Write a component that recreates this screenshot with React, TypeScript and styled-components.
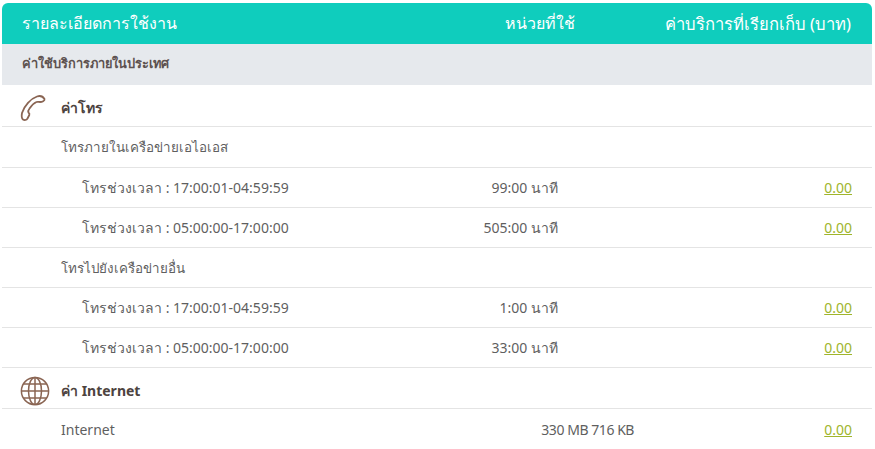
import React from 'react';
import styled, { createGlobalStyle } from 'styled-components';

const GlobalStyle = createGlobalStyle`
  html, body {
    margin: 0;
    padding: 0;
    background: #fff;
    overflow: hidden;
  }
  body {
    font-family: "Noto Sans", "DejaVu Sans", sans-serif;
  }
`;

const Page = styled.div`
  width: 875px;
  height: 449px;
  padding: 3px 3px 0 2px;
  box-sizing: border-box;
  overflow: hidden;
`;

const Card = styled.div`
  background: #fff;
`;

const Columns = styled.div`
  display: grid;
  grid-template-columns: 1fr 200px 218px;
  align-items: center;
`;

const Header = styled(Columns)`
  height: 41px;
  padding: 0 21px 0 20px;
  background: #0fcdbd;
  border-radius: 6px 6px 0 0;
  color: #fff;
  font-size: 16px;
`;

const HeadCell = styled.div<{ $right?: boolean; $pad?: number; $size?: number }>`
  text-align: ${p => (p.$right ? 'right' : 'left')};
  padding-right: ${p => p.$pad ?? 0}px;
  font-size: ${p => p.$size ?? 16}px;
  white-space: nowrap;
`;

const Section = styled.div`
  height: 41px;
  display: flex;
  align-items: center;
  padding: 0 0 2px 20px;
  box-sizing: border-box;
  background: #e6e9ed;
  color: #5d5250;
  font-size: 12.8px;
  font-weight: 700;
`;

const Group = styled.div<{ $tall?: boolean }>`
  height: ${p => (p.$tall ? 42 : 41)}px;
  box-sizing: border-box;
  display: flex;
  align-items: center;
  padding: 5px 0 0 18px;
  border-bottom: 1px solid #e4e4e4;
  color: #4d4340;
  font-size: 14px;
  font-weight: 700;
`;

const GroupIcon = styled.svg`
  width: 30px;
  height: 30px;
  margin-right: 11px;
  flex: none;
  fill: none;
  stroke: #8a6553;
`;

const Row = styled(Columns)<{ $indent?: number; $tall?: boolean }>`
  height: ${p => (p.$tall ? 41 : 40)}px;
  box-sizing: border-box;
  padding: 0 20px 0 ${p => p.$indent ?? 59}px;
  border-bottom: 1px solid #e4e4e4;
  color: #5f5f5f;
  font-size: 14px;
`;

const LastRow = styled(Row)`
  height: 42px;
`;

const Label = styled.div`
  white-space: nowrap;
`;

const SubLabel = styled(Label)`
  padding-top: 1px;
  font-size: 13.4px;
`;

const Usage = styled.div<{ $pad?: number }>`
  text-align: right;
  white-space: nowrap;
  padding-right: ${p => p.$pad ?? 76}px;
`;

const DataUsage = styled(Usage)`
  letter-spacing: -0.45px;
`;

const Cost = styled.a`
  justify-self: end;
  color: #a0b52c;
  text-decoration: underline;
`;

const PhoneIcon = () => (
  <GroupIcon viewBox="0 0 30 30" strokeWidth="1.8" strokeLinejoin="round">
    <path d="M24.500 6C23 3.500 20 2.500 17 3.500 11 5.500 4 13 2 20c-.6 3-.2 5.500 1 6.500 1.500 1 3.500.5 4.500-1L9.300 22c.5-1 0-1.700-.8-2.500-.5-1-.2-2.500 1-4C11.500 12.500 14 10 16.500 9c1.500-.5 2.500 0 3.500 0 2 0 5-1 4.500-3z" />
  </GroupIcon>
);

const GlobeIcon = () => (
  <GroupIcon viewBox="0 0 30 30" strokeWidth="1.5">
    <circle cx="15" cy="15" r="13.600" />
    <ellipse cx="15" cy="15" rx="6.500" ry="13.600" />
    <path d="M15 1.400v27.200M1.400 15h27.200M3.500 8h23M3.500 22h23" />
  </GroupIcon>
);

const callRows = (rows: [string, string][]) =>
  rows.map(([time, usage]) => (
    <Row key={time + usage} $indent={80}>
      <Label>โทรช่วงเวลา : {time}</Label>
      <Usage>{usage}</Usage>
      <Cost>0.00</Cost>
    </Row>
  ));

const App: React.FC = () => {
  return (
    <Page>
      <GlobalStyle />
      <Card>
        <Header>
          <HeadCell>รายละเอียดการใช้งาน</HeadCell>
          <HeadCell $right $pad={58}>หน่วยที่ใช้</HeadCell>
          <HeadCell $right $size={16.6}>ค่าบริการที่เรียกเก็บ (บาท)</HeadCell>
        </Header>
        <Section>ค่าใช้บริการภายในประเทศ</Section>
        <Group $tall>
          <PhoneIcon />
          ค่าโทร
        </Group>
        <Row $tall>
          <SubLabel>โทรภายในเครือข่ายเอไอเอส</SubLabel>
        </Row>
        {callRows([
          ['17:00:01-04:59:59', '99:00 นาที'],
          ['05:00:00-17:00:00', '505:00 นาที'],
        ])}
        <Row>
          <SubLabel>โทรไปยังเครือข่ายอื่น</SubLabel>
        </Row>
        {callRows([
          ['17:00:01-04:59:59', '1:00 นาที'],
          ['05:00:00-17:00:00', '33:00 นาที'],
        ])}
        <Group>
          <GlobeIcon />
          ค่า Internet
        </Group>
        <LastRow>
          <Label>Internet</Label>
          <DataUsage $pad={0}>330 MB 716 KB</DataUsage>
          <Cost>0.00</Cost>
        </LastRow>
      </Card>
    </Page>
  );
};

export default App;
